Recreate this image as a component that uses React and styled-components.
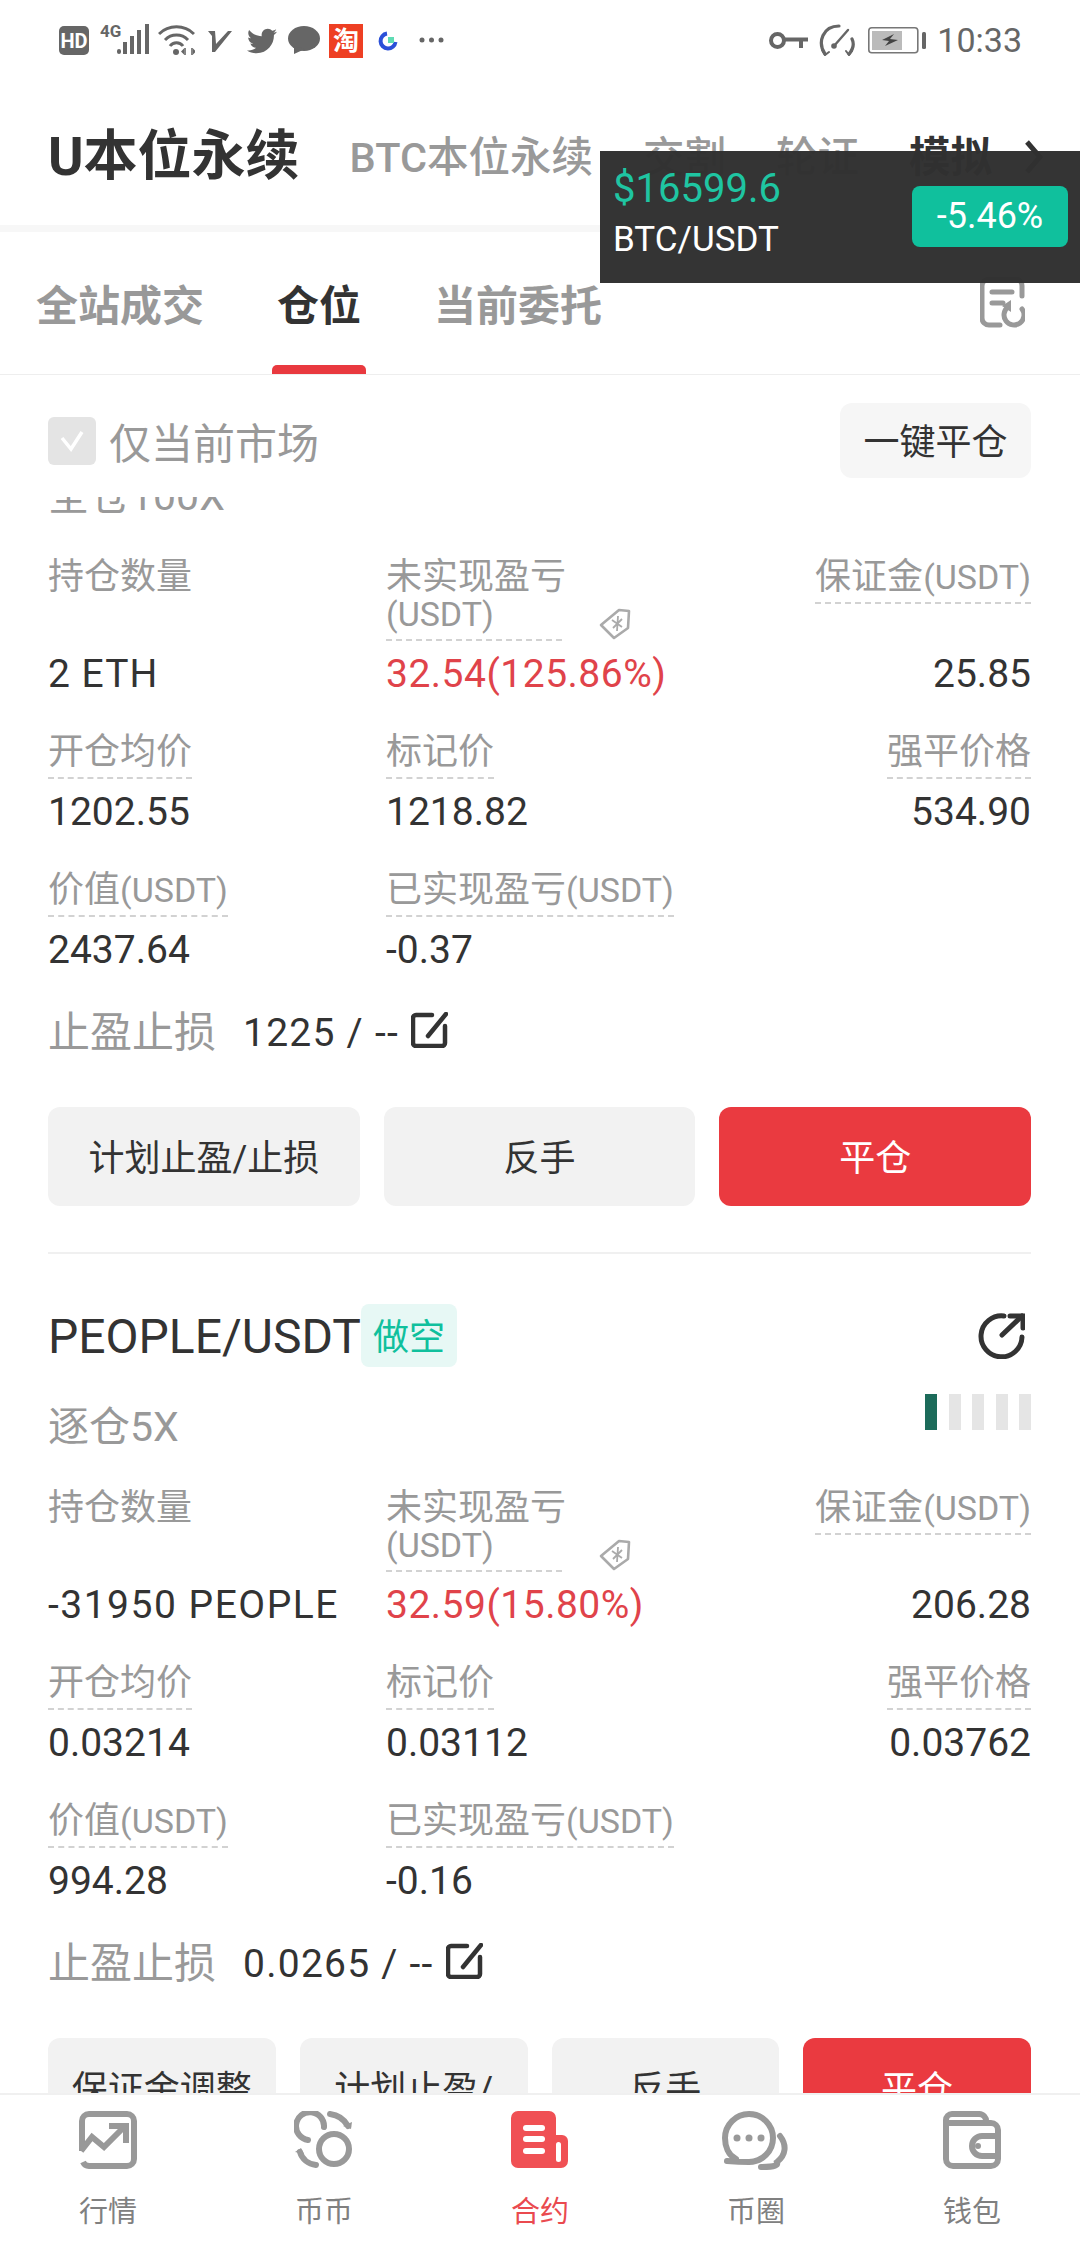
import React from 'react';
import styled, { createGlobalStyle } from 'styled-components';
import { FaTwitter } from 'react-icons/fa';

const Global = createGlobalStyle`
  html, body { margin: 0; padding: 0; background: #fff; }
  * { box-sizing: border-box; }
`;

const FONT = `Roboto, "Noto Sans CJK SC", sans-serif`;

const Page = styled.div`
  position: relative;
  width: 1080px;
  height: 2244px;
  overflow: hidden;
  background: #fff;
  display: flex;
  flex-direction: column;
  font-family: ${FONT};
  color: #333;
`;

const StatusBar = styled.div`
  height: 80px;
  flex: none;
  padding: 0 58px 0 59px;
  display: flex;
  align-items: center;
  color: #666;
`;
const Glyph = styled.svg`
  flex: none;
  display: block;
  margin-left: ${p => p.$ml || 0}px;
  margin-top: ${p => p.$mt || 0}px;
`;
const TwitterMark = styled(FaTwitter)`
  flex: none;
  margin-left: 15px;
  margin-top: 2px;
  color: #666;
`;
const TaoBadge = styled.div`
  flex: none;
  width: 34px;
  height: 34px;
  margin-left: 9px;
  margin-top: 2px;
  background: #ee3f23;
  color: #fff;
  font-size: 26px;
  font-weight: 700;
  line-height: 34px;
  text-align: center;
`;
const StatusRight = styled.div`
  margin-left: auto;
  display: flex;
  align-items: center;
`;
const Clock = styled.div`
  margin-left: 11px;
  font-size: 34px;
  line-height: 40px;
  color: #666;
`;

const Header = styled.div`
  height: 145px;
  flex: none;
  padding: 8px 0 0 48px;
  display: flex;
  align-items: center;
`;
const Title = styled.div`
  font-size: 54px;
  font-weight: 700;
  line-height: 60px;
  color: #333;
  margin-right: 50px;
`;
const Market = styled.div`
  font-size: 41.5px;
  font-weight: ${p => (p.$active ? 700 : 500)};
  color: ${p => (p.$active ? '#333' : '#999')};
  line-height: 60px;
  margin-right: 50px;
  margin-top: 2px;
`;
const Chevron = styled.svg`
  margin-left: -17px;
  flex: none;
`;
const ThickRule = styled.div`
  height: 7px;
  flex: none;
  background: #f7f7f7;
`;

const Tabs = styled.div`
  height: 143px;
  flex: none;
  padding: 0 55px 0 31px;
  display: flex;
  align-items: stretch;
  gap: 63px;
  border-bottom: 1px solid #eee;
`;
const Tab = styled.div`
  position: relative;
  padding: 51px 5px 0;
  font-size: 42px;
  font-weight: 700;
  line-height: 48px;
  color: ${p => (p.$active ? '#333' : '#999')};
`;
const TabMark = styled.div`
  position: absolute;
  left: 0;
  right: 0;
  bottom: 0;
  height: 9px;
  border-radius: 5px 5px 0 0;
  background: #e9393f;
`;
const DocIcon = styled.svg`
  margin-left: auto;
  margin-top: 45px;
  flex: none;
`;

const FilterRow = styled.div`
  height: 122px;
  flex: none;
  padding: 28px 49px 0 48px;
  display: flex;
  align-items: flex-start;
`;
const Check = styled.div`
  width: 48px;
  height: 48px;
  margin-top: 14px;
  border-radius: 6px;
  background: #e4e4e4;
  display: flex;
  align-items: center;
  justify-content: center;
`;
const CheckLabel = styled.div`
  margin-left: 13px;
  margin-top: 18px;
  font-size: 42px;
  line-height: 48px;
  color: #999;
`;
const CloseAll = styled.div`
  margin-left: auto;
  width: 191px;
  height: 75px;
  border-radius: 12px;
  background: #f6f6f6;
  font-size: 36px;
  line-height: 80px;
  text-align: center;
  color: #333;
`;

const Scroller = styled.div`
  flex: 1;
  min-height: 0;
  overflow: hidden;
`;
const ScrollInner = styled.div`
  margin-top: -31px;
  padding: 0 49px 0 48px;
`;
const Card = styled.div`
  padding-top: ${p => (p.$first ? 0 : 50)}px;
  padding-bottom: 46px;
  border-bottom: ${p => (p.$first ? '2px solid #f0f0f0' : 'none')};
`;
const TitleRow = styled.div`
  display: flex;
  align-items: center;
  height: 63px;
  margin-bottom: 30px;
`;
const Pair = styled.div`
  font-size: 48px;
  line-height: 60px;
  color: #333;
  margin-top: 3px;
`;
const SideBadge = styled.div`
  width: 96px;
  height: 63px;
  border-radius: 8px;
  background: #e7f8f5;
  color: #10c09d;
  font-size: 36px;
  line-height: 68px;
  text-align: center;
`;
const ShareIcon = styled.svg`
  margin-left: auto;
  margin-right: 6px;
  flex: none;
`;
const LeverageRow = styled.div`
  height: 60px;
  display: flex;
  align-items: center;
  justify-content: space-between;
  margin-bottom: 33px;
`;
const Leverage = styled.div`
  font-size: 41px;
  line-height: 46px;
  color: #999;
`;
const Risk = styled.div`
  display: flex;
  gap: 11.5px;
  align-self: flex-start;
  margin-top: -3px;
`;
const RiskBar = styled.div`
  width: 12px;
  height: 36px;
  background: ${p => (p.$on ? '#1c6b5a' : '#e5e5e5')};
`;
const Grid = styled.div`
  display: grid;
  grid-template-columns: 338px 338px 1fr;
  row-gap: 37px;
`;
const Cell = styled.div`
  display: flex;
  flex-direction: column;
  justify-content: space-between;
  align-items: ${p => (p.$right ? 'flex-end' : 'flex-start')};
`;
const LabelWrap = styled.div`
  display: flex;
  align-items: flex-end;
`;
const Label = styled.div`
  font-size: 36px;
  line-height: 37px;
  color: #999;
  white-space: nowrap;
  width: ${p => (p.$w ? `${p.$w}px` : 'auto')};
  padding-bottom: ${p => (p.$plain ? 0 : 6)}px;
  border-bottom: ${p => (p.$plain ? 'none' : '2px dashed #d2d2d2')};
`;
const Unit = styled.span`
  font-size: 34px;
`;
const TagIcon = styled.svg`
  margin-left: 37px;
  margin-bottom: 1px;
  flex: none;
`;
const Value = styled.div`
  margin-top: 10px;
  font-size: 39px;
  line-height: 46px;
  white-space: nowrap;
  letter-spacing: ${p => p.$track || 0}px;
  color: ${p => (p.$red ? '#e0434a' : '#333')};
`;
const StopRow = styled.div`
  height: 50px;
  margin-top: 35px;
  display: flex;
  align-items: center;
`;
const StopLabel = styled.div`
  font-size: 42px;
  line-height: 50px;
  color: #999;
`;
const StopValue = styled.div`
  margin-left: 27px;
  font-size: 39px;
  line-height: 50px;
  letter-spacing: 1.25px;
  color: #333;
`;
const EditIcon = styled.svg`
  margin-left: 12px;
  margin-top: -7px;
  flex: none;
`;
const Actions = styled.div`
  margin-top: 49px;
  display: grid;
  grid-template-columns: repeat(${p => p.$n}, 1fr);
  gap: 24px;
`;
const Action = styled.div`
  min-height: 99px;
  padding: 30px 20px 24px;
  border-radius: 12px;
  background: ${p => (p.$danger ? '#ea3a40' : '#f2f2f2')};
  color: ${p => (p.$danger ? '#fff' : '#333')};
  font-size: 36px;
  line-height: 45px;
  text-align: center;
`;

const BottomNav = styled.div`
  height: 151px;
  flex: none;
  display: grid;
  grid-template-columns: repeat(5, 1fr);
  background: #fff;
  border-top: 2px solid #f0f0f0;
`;
const NavItem = styled.div`
  display: flex;
  flex-direction: column;
  align-items: center;
  padding-top: 16px;
  color: ${p => (p.$active ? '#ea4a4f' : '#808080')};
`;
const NavIconBox = styled.div`
  height: 58px;
  display: flex;
  align-items: flex-start;
  justify-content: center;
`;
const NavLabel = styled.div`
  margin-top: 26px;
  font-size: 29px;
  line-height: 34px;
`;

const Ticker = styled.div`
  position: absolute;
  left: 600px;
  top: 151px;
  width: 480px;
  height: 132px;
  padding: 16px 12px 0 13px;
  background: rgba(48, 48, 48, 0.98);
  display: flex;
  justify-content: space-between;
`;
const TickerPrice = styled.div`
  font-size: 40px;
  line-height: 44px;
  color: #1fc5a2;
`;
const TickerPair = styled.div`
  margin-top: 9px;
  font-size: 35px;
  line-height: 40px;
  color: #fff;
`;
const TickerBadge = styled.div`
  width: 156px;
  height: 61px;
  margin-top: 19px;
  border-radius: 8px;
  background: #10c09d;
  color: #fff;
  font-size: 36px;
  line-height: 61px;
  text-align: center;
`;

const StatusLeft = () => (
  <>
    <Glyph width="30" height="29" viewBox="0 0 30 29">
      <rect width="30" height="29" rx="5" fill="#666" />
      <text x="15" y="21.5" textAnchor="middle" fontSize="20" fontWeight="700" fontFamily="Roboto, sans-serif" fill="#fff">HD</text>
    </Glyph>
    <Glyph $ml={11} width="50" height="32" viewBox="0 0 50 32">
      <text x="0" y="13" fontSize="17" fontWeight="700" fontFamily="Roboto, sans-serif" fill="#666">4G</text>
      <rect x="17" y="25" width="4" height="5" rx="2" fill="#666" />
      <rect x="23" y="18" width="4" height="12" fill="#666" />
      <rect x="30" y="12" width="4" height="18" fill="#666" />
      <rect x="37" y="6" width="4" height="24" fill="#666" />
      <rect x="45" y="0" width="4" height="30" fill="#666" />
    </Glyph>
    <Glyph $ml={8} width="37" height="30" viewBox="0 0 37 30" fill="none" stroke="#666" strokeWidth="3">
      <path d="M1 9a25 25 0 0 1 35 0" />
      <path d="M7 15a16 16 0 0 1 23 0" />
      <path d="M12 21a8 8 0 0 1 13 0" />
      <circle cx="18" cy="27" r="3" fill="#666" stroke="none" />
      <path d="M27 23v7M34 23v7" strokeWidth="1.6" />
      <path d="M23 26.5l3-3v6zM35 23.5l3 3-3 3z" fill="#666" stroke="none" />
    </Glyph>
    <Glyph $ml={13} $mt={2} width="24" height="22" viewBox="0 0 24 22">
      <path d="M0 1h7l1 13L20 1h4L7 22H4L4 6z" fill="#666" />
    </Glyph>
    <TwitterMark size={30} />
    <Glyph $ml={11} width="32" height="28" viewBox="0 0 32 28">
      <ellipse cx="16" cy="12.5" rx="16" ry="12.5" fill="#666" />
      <path d="M6 20l0 8 11-5z" fill="#666" />
    </Glyph>
    <TaoBadge>淘</TaoBadge>
    <Glyph $ml={15} $mt={2} width="20" height="20" viewBox="0 0 20 20" fill="none">
      <path d="M9 2.5A7.5 7.5 0 1 0 17.5 11" stroke="#2b50d8" strokeWidth="4" />
      <rect x="10" y="6" width="6" height="6" fill="#5fdcb4" />
    </Glyph>
    <Glyph $ml={21} width="25" height="6" viewBox="0 0 25 6">
      <circle cx="3" cy="3" r="2.5" fill="#666" />
      <circle cx="12.5" cy="3" r="2.5" fill="#666" />
      <circle cx="22" cy="3" r="2.5" fill="#666" />
    </Glyph>
  </>
);

const StatusEnd = () => (
  <StatusRight>
    <Glyph width="39" height="17" viewBox="0 0 39 17" fill="none" stroke="#666">
      <circle cx="8.5" cy="8.5" r="6.5" strokeWidth="4" />
      <path d="M15 7.5h24" strokeWidth="4" />
      <path d="M32 8v8" strokeWidth="4" />
    </Glyph>
    <Glyph $ml={11} width="36" height="32" viewBox="0 0 36 32" fill="none" stroke="#666" strokeWidth="3.2" strokeLinecap="round">
      <path d="M6 30C-2 18 4 2 20 2" />
      <path d="M30 30c5-6 5-11 3-15" />
      <path d="M3 26l3 5 4-3M27 27l3 4 3-4" strokeWidth="2" />
      <path d="M15 22L29 6" strokeWidth="2.4" />
      <circle cx="15" cy="22" r="2.8" fill="#666" stroke="none" />
    </Glyph>
    <Glyph $ml={13} width="58" height="27" viewBox="0 0 58 27">
      <rect x="0.8" y="0.8" width="49" height="25" rx="3" fill="none" stroke="#777" strokeWidth="1.6" />
      <rect x="4" y="4" width="30" height="19" fill="#bbb" />
      <path d="M14 13l12-6-4 5 8 1-13 6 4-5z" fill="#444" />
      <rect x="54" y="5" width="4" height="17" rx="1.5" fill="#666" />
    </Glyph>
    <Clock>10:33</Clock>
  </StatusRight>
);

const TagGlyph = () => (
  <TagIcon width="32" height="32" viewBox="0 0 32 32" fill="none" stroke="#aaa" strokeWidth="2.6" strokeLinejoin="round">
    <path d="M2 17L20 2l10 1-1 17-14 10z" />
    <path d="M13 12l10 7M23 11l-9 9M19 8l-1 15" strokeWidth="1.8" />
  </TagIcon>
);
const Edit = () => (
  <EditIcon width="37" height="36" viewBox="0 0 37 36" fill="none" stroke="#333" strokeWidth="4.5" strokeLinecap="round">
    <path d="M21 3H5a3 3 0 0 0-3 3v25a3 3 0 0 0 3 3h26a3 3 0 0 0 3-3V14" />
    <path d="M35 2L17 24" />
  </EditIcon>
);

const Metrics = ({ size, sizeTrack, pnl, margin, open, mark, liq, worth, real }) => (
  <Grid>
    <Cell>
      <Label $plain>持仓数量</Label>
      <Value $track={sizeTrack}>{size}</Value>
    </Cell>
    <Cell>
      <LabelWrap>
        <Label $w={176}>未实现盈亏<br /><Unit>(USDT)</Unit></Label>
        <TagGlyph />
      </LabelWrap>
      <Value $red $track={0.5}>{pnl}</Value>
    </Cell>
    <Cell $right>
      <Label>保证金<Unit>(USDT)</Unit></Label>
      <Value>{margin}</Value>
    </Cell>
    <Cell>
      <Label>开仓均价</Label>
      <Value>{open}</Value>
    </Cell>
    <Cell>
      <Label>标记价</Label>
      <Value>{mark}</Value>
    </Cell>
    <Cell $right>
      <Label>强平价格</Label>
      <Value>{liq}</Value>
    </Cell>
    <Cell>
      <Label>价值<Unit>(USDT)</Unit></Label>
      <Value>{worth}</Value>
    </Cell>
    <Cell>
      <Label>已实现盈亏<Unit>(USDT)</Unit></Label>
      <Value>{real}</Value>
    </Cell>
  </Grid>
);

const navIcons = [
  <svg key="a" width="58" height="58" viewBox="0 0 58 58" fill="none" stroke="#999" strokeWidth="6">
    <path d="M3 40V10a7 7 0 0 1 7-7h38a7 7 0 0 1 7 7v38a7 7 0 0 1-7 7H10a7 7 0 0 1-6-4" />
    <path d="M2 40l11-14 12 10 20-20" />
    <path d="M30 15h17v17" />
  </svg>,
  <svg key="b" width="60" height="58" viewBox="0 0 60 58" fill="none" stroke="#999" strokeWidth="6" strokeLinecap="round">
    <path d="M30 16A14 14 0 1 0 14 29" />
    <circle cx="40" cy="38" r="15" />
    <path d="M36 3c8 1 14 5 18 12" />
    <path d="M49 15l8 3 1-7" fill="#999" stroke="none" />
    <path d="M6 41c2 7 8 12 16 13" />
    <path d="M1 41l6-4 3 6" fill="#999" stroke="none" />
  </svg>,
  <svg key="c" width="58" height="58" viewBox="0 0 58 58">
    <path d="M7 0h31a7 7 0 0 1 7 7v17h6a6 6 0 0 1 6 6v20a7 7 0 0 1-7 7H7a7 7 0 0 1-7-7V7a7 7 0 0 1 7-7z" fill="#f05054" />
    <rect x="12" y="14" width="22" height="6" rx="3" fill="#fff" />
    <rect x="12" y="25" width="22" height="6" rx="3" fill="#fff" />
    <rect x="12" y="37" width="22" height="6" rx="3" fill="#fff" />
    <rect x="45" y="31" width="5" height="20" rx="2.5" fill="#fff" />
  </svg>,
  <svg key="d" width="68" height="60" viewBox="0 0 68 60" fill="none" stroke="#999" strokeWidth="6" strokeLinecap="round">
    <path d="M14 48C6 44 3 35 3 27a24 24 0 1 1 24 24c-6 0-10 0-22 -1" />
    <circle cx="15" cy="27" r="3.5" fill="#999" stroke="none" />
    <circle cx="27" cy="27" r="3.5" fill="#999" stroke="none" />
    <circle cx="39" cy="27" r="3.5" fill="#999" stroke="none" />
    <path d="M58 25c7 9 6 19-3 26 1 3-1 5-16 5" />
  </svg>,
  <svg key="e" width="58" height="58" viewBox="0 0 58 58" fill="none" stroke="#999" strokeWidth="6" strokeLinejoin="round">
    <path d="M3 14V9a6 6 0 0 1 6-6h27a7 7 0 0 1 7 8" />
    <path d="M3 12h45a7 7 0 0 1 7 7v29a7 7 0 0 1-7 7H10a7 7 0 0 1-7-7z" />
    <path d="M55 25H39a10 10 0 0 0 0 20h16" />
    <circle cx="35" cy="35" r="3" fill="#999" stroke="none" />
  </svg>,
];
const navLabels = ['行情', '币币', '合约', '币圈', '钱包'];

export default function App() {
  return (
    <Page>
      <Global />
      <StatusBar>
        <StatusLeft />
        <StatusEnd />
      </StatusBar>
      <Header>
        <Title>U本位永续</Title>
        <Market>BTC本位永续</Market>
        <Market>交割</Market>
        <Market>轮证</Market>
        <Market $active>模拟</Market>
        <Chevron width="18" height="34" viewBox="0 0 18 34" fill="none" stroke="#333" strokeWidth="5">
          <path d="M2 2l13 15L2 32" />
        </Chevron>
      </Header>
      <ThickRule />
      <Tabs>
        <Tab>全站成交</Tab>
        <Tab $active>仓位<TabMark /></Tab>
        <Tab>当前委托</Tab>
        <DocIcon width="45" height="51" viewBox="0 0 45 51" fill="none" stroke="#999" strokeWidth="5" strokeLinecap="round">
          <path d="M20 48H9a7 7 0 0 1-7-7V9a7 7 0 0 1 7-7h27a7 7 0 0 1 6 7v10" />
          <path d="M12 15h20M12 26h11" />
          <path d="M28 30a10 10 0 1 0 14 2" />
          <path d="M31 23v12l-9-6z" fill="#999" stroke="none" />
        </DocIcon>
      </Tabs>
      <FilterRow>
        <Check>
          <svg width="26" height="22" viewBox="0 0 26 22" fill="none" stroke="#fff" strokeWidth="3.5">
            <path d="M3 8l9 11L23 2" />
          </svg>
        </Check>
        <CheckLabel>仅当前市场</CheckLabel>
        <CloseAll>一键平仓</CloseAll>
      </FilterRow>
      <Scroller>
        <ScrollInner>
          <Card $first>
            <LeverageRow>
              <Leverage>全仓100X</Leverage>
            </LeverageRow>
            <Metrics size="2 ETH" sizeTrack={1} pnl="32.54(125.86%)" margin="25.85" open="1202.55" mark="1218.82" liq="534.90" worth="2437.64" real="-0.37" />
            <StopRow>
              <StopLabel>止盈止损</StopLabel>
              <StopValue>1225 / --</StopValue>
              <Edit />
            </StopRow>
            <Actions $n={3}>
              <Action>计划止盈/止损</Action>
              <Action>反手</Action>
              <Action $danger>平仓</Action>
            </Actions>
          </Card>
          <Card>
            <TitleRow>
              <Pair>PEOPLE/USDT</Pair>
              <SideBadge>做空</SideBadge>
              <ShareIcon width="47" height="46" viewBox="0 0 47 46" fill="none" stroke="#333" strokeWidth="5" strokeLinecap="round">
                <path d="M26 3A20.5 20.5 0 1 0 44 24" />
                <path d="M24 22L44 3" />
                <path d="M32 3h13v12" />
              </ShareIcon>
            </TitleRow>
            <LeverageRow>
              <Leverage>逐仓5X</Leverage>
              <Risk>
                <RiskBar $on />
                <RiskBar />
                <RiskBar />
                <RiskBar />
                <RiskBar />
              </Risk>
            </LeverageRow>
            <Metrics size="-31950 PEOPLE" sizeTrack={1.5} pnl="32.59(15.80%)" margin="206.28" open="0.03214" mark="0.03112" liq="0.03762" worth="994.28" real="-0.16" />
            <StopRow>
              <StopLabel>止盈止损</StopLabel>
              <StopValue>0.0265 / --</StopValue>
              <Edit />
            </StopRow>
            <Actions $n={4}>
              <Action>保证金调整</Action>
              <Action>计划止盈/止损</Action>
              <Action>反手</Action>
              <Action $danger>平仓</Action>
            </Actions>
          </Card>
        </ScrollInner>
      </Scroller>
      <BottomNav>
        {navLabels.map((l, i) => (
          <NavItem key={l} $active={i === 2}>
            <NavIconBox>{navIcons[i]}</NavIconBox>
            <NavLabel>{l}</NavLabel>
          </NavItem>
        ))}
      </BottomNav>
      <Ticker>
        <div>
          <TickerPrice>$16599.6</TickerPrice>
          <TickerPair>BTC/USDT</TickerPair>
        </div>
        <TickerBadge>-5.46%</TickerBadge>
      </Ticker>
    </Page>
  );
}
